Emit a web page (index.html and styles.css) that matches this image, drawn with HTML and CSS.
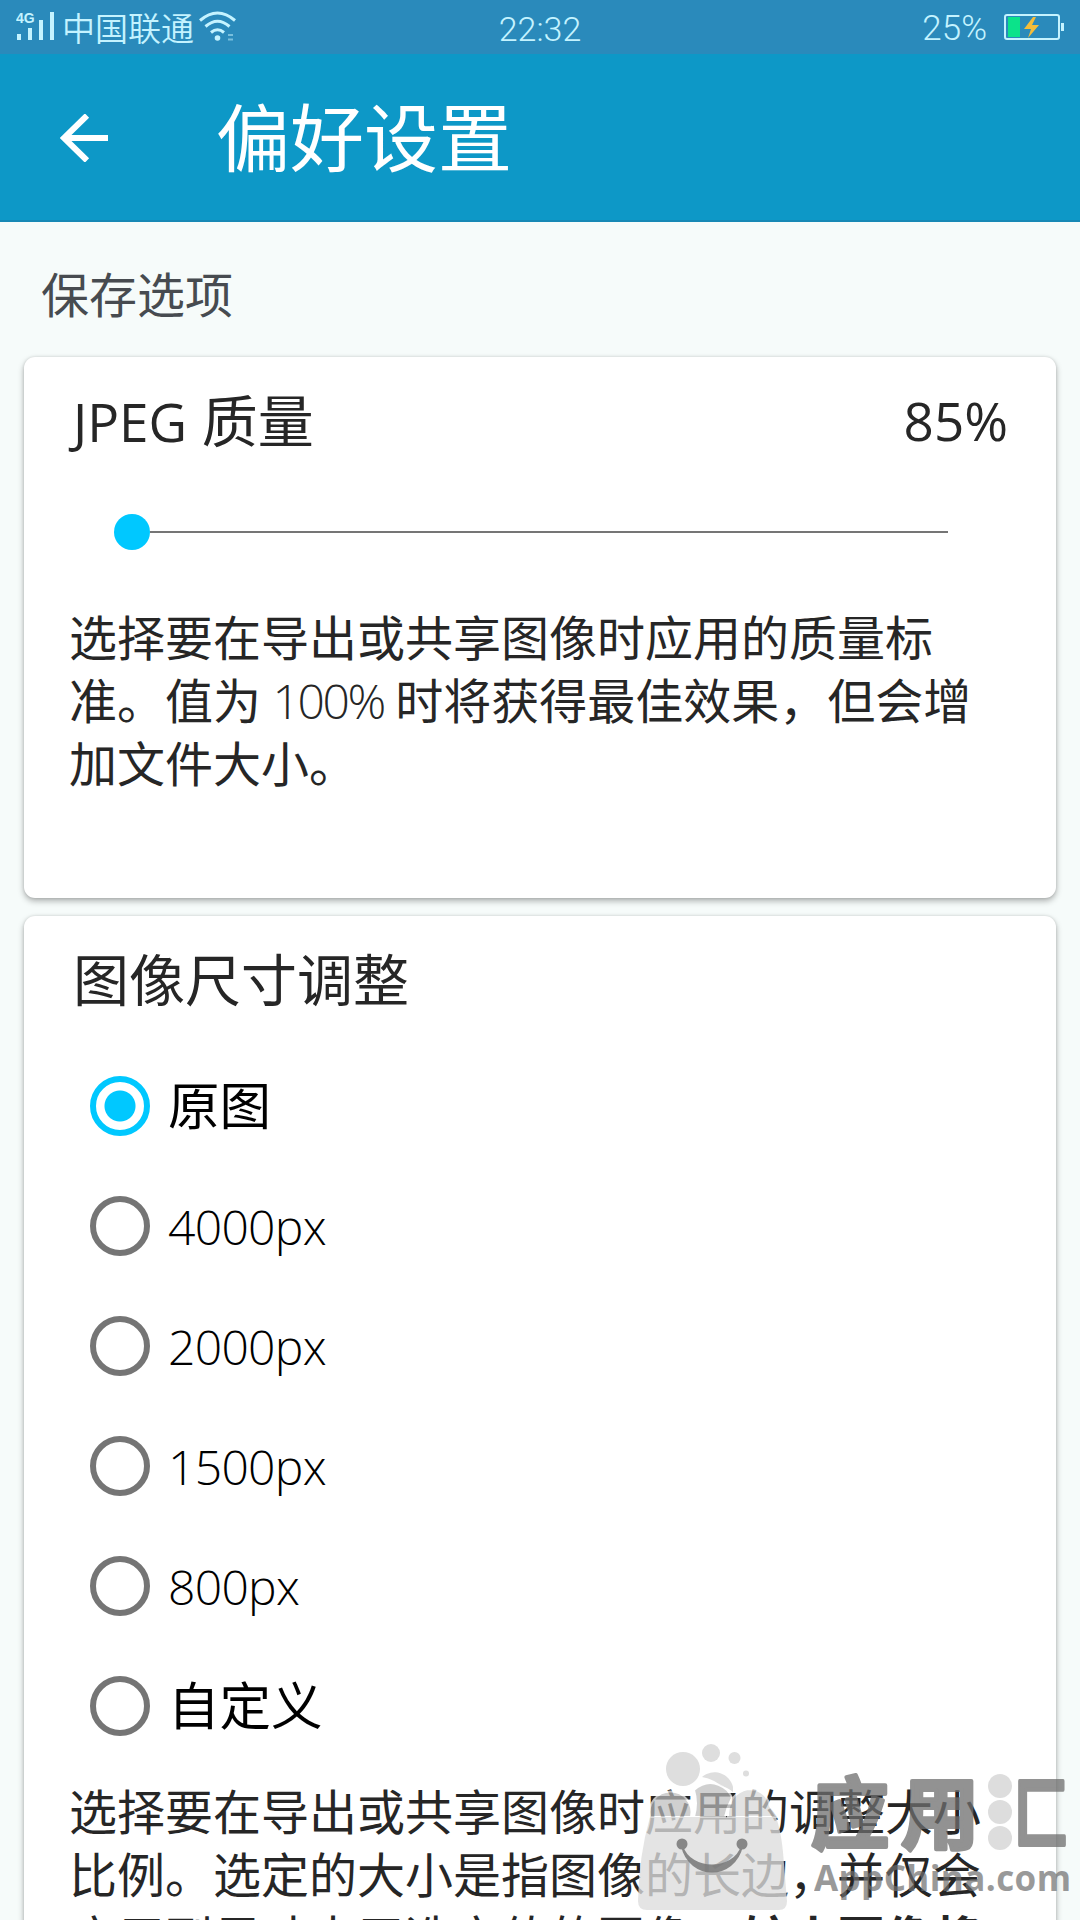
FILE: index.html
```html
<!DOCTYPE html>
<html lang="zh-CN">
<head>
    <meta charset="UTF-8">
    <meta name="viewport" content="width=device-width, initial-scale=1.0">
    <title>偏好设置</title>
    <link rel="stylesheet" href="styles.css">
</head>
<body>
    <div class="status-bar">
        <div class="status-left">
            <svg class="signal" width="42" height="32" viewBox="0 0 42 32">
                <text class="signal-label" x="0" y="12">4G</text>
                <path d="M1 23h4v6H1zM12 17h4v12h-4zM23 9h4v20h-4zM34 1h4v28h-4z"/>
            </svg>
            <span class="carrier">中国联通</span>
            <svg class="wifi" width="38" height="32" viewBox="0 0 38 32">
                <path d="M1 9.500Q18.500-5.500 36 9.500M6.500 15.500Q18.500 5 30.500 15.500M12 21.500Q18.500 16 25 21.500"/>
                <circle cx="18.500" cy="27" r="2.800"/>
                <path class="wifi-io" d="M29 24h5M29 28.500h5"/>
            </svg>
        </div>
        <span class="clock">22:32</span>
        <div class="status-right">
            <span class="percent">25%</span>
            <svg width="60" height="26" viewBox="0 0 60 26">
                <rect class="battery-body" x="1" y="1" width="54" height="24" rx="2"/>
                <rect class="battery-level" x="4" y="3" width="12" height="20"/>
                <path class="battery-tip" d="M57 9h3v8h-3z"/>
                <path class="bolt" d="M29 3L20 15h7l-3 9 11-13h-7l4-8z"/>
            </svg>
        </div>
    </div>

    <header class="toolbar">
        <svg class="back" width="48" height="48" viewBox="0 0 48 48">
            <path d="M48 24H4M27 1.500L4 24l23 22.500"/>
        </svg>
        <h1>偏好设置</h1>
    </header>

    <main>
        <h2 class="section-title">保存选项</h2>

        <section class="card quality">
            <div class="card-head">
                <h3><span class="latin">JPEG</span> 质量</h3>
                <span class="latin value">85%</span>
            </div>
            <div class="slider">
                <div class="thumb"></div>
                <div class="track"></div>
            </div>
            <p>选择要在导出或共享图像时应用的质量标<br>准。值为 <span class="light">100%</span> 时将获得最佳效果，但会增<br>加文件大小。</p>
        </section>

        <section class="card resize">
            <div class="card-head">
                <h3>图像尺寸调整</h3>
            </div>
            <ul class="options">
                <li><span class="radio checked"></span><span class="cjk">原图</span></li>
                <li><span class="radio"></span><span class="size">4000px</span></li>
                <li><span class="radio"></span><span class="size">2000px</span></li>
                <li><span class="radio"></span><span class="size">1500px</span></li>
                <li><span class="radio"></span><span class="size">800px</span></li>
                <li><span class="radio"></span><span class="cjk">自定义</span></li>
            </ul>
            <p>选择要在导出或共享图像时应用的调整大小<br>比例。选定的大小是指图像的长边，并仅会<br>应用到尺寸大于选定值的图像。<b>较小图像将</b></p>
        </section>
    </main>

    <svg class="watermark" width="480" height="200" viewBox="0 0 480 200">
        <g class="bubbles">
            <circle cx="83" cy="49" r="17"/>
            <circle cx="111" cy="33" r="9"/>
            <circle cx="134.500" cy="38" r="6"/>
            <circle cx="146" cy="53.500" r="3"/>
            <path d="M102 57a19 19 0 0 1 31 10v5q-6-5-12-6-7-7-19-9z"/>
        </g>
        <g class="foam">
            <path d="M50 97a21 21 0 1 1 41 0z"/>
            <path d="M94 70q16-14 33 0 4 5 5 8-5 9-7 19H94q4-14 0-27z"/>
            <path class="foam-light" d="M128 97q0-24 20-28 18 0 22 17l6 11z"/>
        </g>
        <path class="bag" d="M50 97h126q5 14 7 35l4 49q0 9-8 9H47q-9 0-9-9 1-46 12-84z"/>
        <g class="smile">
            <circle cx="82" cy="124" r="5.500"/>
            <circle cx="142" cy="124" r="5.500"/>
            <path d="M82 126c8 34 52 34 60 0-8 26-52 26-60 0z"/>
        </g>
        <g class="brand">
            <text x="211" y="123" textLength="168">应用</text>
            <text transform="translate(414 123) scale(.7 1)">匚</text>
        </g>
        <g class="dots">
            <circle cx="400" cy="66" r="12"/>
            <circle cx="400" cy="92" r="12"/>
            <circle cx="400" cy="118" r="12"/>
        </g>
        <text class="site" x="214" y="171" textLength="257">AppChina.com</text>
    </svg>
</body>
</html>
```

FILE: styles.css
```css
* {
    box-sizing: border-box;
}
body {
    margin: 0;
    width: 1080px;
    height: 1920px;
    overflow: hidden;
    position: relative;
    background-color: #f6fbfa;
    color: #262626;
    font-family: "Open Sans", "Noto Sans CJK SC", sans-serif;
}
h1, h2, h3, p, ul {
    margin: 0;
    padding: 0;
    font-size: inherit;
    font-weight: normal;
}
.status-bar {
    height: 54px;
    padding: 0 16px;
    display: grid;
    grid-template-columns: 1fr auto 1fr;
    align-items: center;
    background-color: #2a8abb;
    color: #c4f3ff;
    font-family: Roboto, "Noto Sans CJK SC", sans-serif;
    font-size: 33px;
}
.status-left, .status-right {
    display: flex;
    align-items: center;
}
.status-left svg {
    fill: #c4f3ff;
}
.signal-label {
    font: bold 14px "Liberation Sans", sans-serif;
}
.carrier {
    margin-left: 4px;
    font-weight: 350;
}
.clock, .percent {
    padding-top: 3px;
    font-weight: 300;
    font-size: 34px;
}
.percent {
    font-size: 35px;
}
.wifi {
    margin-left: 5px;
}
.wifi path {
    fill: none;
    stroke: #c4f3ff;
    stroke-width: 3;
}
.wifi .wifi-io {
    stroke-width: 2;
    opacity: .5;
}
.status-right {
    justify-content: flex-end;
    gap: 17px;
}
.battery-body {
    fill: none;
    stroke: #c4f3ff;
    stroke-width: 2;
}
.battery-level {
    fill: #0be38a;
}
.battery-tip {
    fill: #c4f3ff;
}
.bolt {
    fill: #f4bd3a;
}
.toolbar {
    height: 168px;
    padding: 2px 60px 0;
    display: flex;
    align-items: center;
    gap: 108px;
    background-color: #0d98c7;
    border-bottom: 2px solid #1788b5;
    color: #fff;
}
.back {
    fill: none;
    stroke: #fff;
    stroke-width: 6;
}
.toolbar h1 {
    font-size: 74px;
    line-height: 100px;
}
main {
    padding: 0 24px;
}
.section-title {
    padding: 38px 17px 0;
    height: 135px;
    font-size: 48px;
    line-height: 70px;
    color: #474b50;
}
.card {
    padding: 24px 45px;
    background-color: #fff;
    border-radius: 11px;
    box-shadow: 0 3px 6px rgba(0, 0, 0, .3), 0 0 3px rgba(0, 0, 0, .12);
}
.quality {
    height: 541px;
    margin-bottom: 18px;
}
.resize {
    height: 1100px;
}
.card-head {
    height: 82px;
    padding: 0 3px 0 4px;
    display: flex;
    justify-content: space-between;
    font-size: 56px;
    line-height: 78px;
}
.latin {
    font-size: 53px;
    font-weight: 500;
}
.value {
    line-height: 80px;
}
.slider {
    height: 138px;
    padding: 0 63px 0 45px;
    display: flex;
    align-items: center;
}
.thumb {
    width: 36px;
    height: 36px;
    border-radius: 50%;
    background-color: #00c8ff;
}
.track {
    flex: 1;
    height: 2px;
    background-color: #757575;
}
.card p {
    padding-top: 5px;
    font-size: 48px;
    line-height: 63px;
    white-space: nowrap;
}
.light {
    font-weight: 300;
    letter-spacing: -2.4px;
    margin: 0 -1px 0 -1px;
}
.options {
    list-style: none;
    padding: 24px 21px 0;
    color: #000;
}
.options li {
    height: 120px;
    display: flex;
    align-items: center;
    gap: 18px;
}
.cjk {
    padding-bottom: 7px;
    font-size: 51.5px;
}
.size {
    font-size: 48px;
    font-weight: 300;
    letter-spacing: -.7px;
}
.resize p {
    padding-top: 14px;
}
.radio {
    width: 60px;
    height: 60px;
    border: 6px solid #757575;
    border-radius: 50%;
}
.radio.checked {
    border-color: #00c8ff;
    background: radial-gradient(circle, #00c8ff 15px, #fff 16px);
}
.watermark {
    position: absolute;
    left: 600px;
    top: 1720px;
}
.bubbles {
    fill: #d6d6d6;
    opacity: .8;
}
.foam {
    fill: #bdbdbd;
    stroke: #fff;
    stroke-width: 2;
    opacity: .7;
}
.foam-light {
    fill: #d6d6d6;
}
.bag {
    fill: #dcdcdc;
    opacity: .78;
}
.smile {
    fill: #777;
    opacity: .85;
}
.smile path {
    stroke: #777;
    stroke-width: 2;
}
.brand {
    font: bold 78px "Noto Sans CJK SC", sans-serif;
    fill: #6e6e6e;
    stroke: #6e6e6e;
    stroke-width: 4;
    stroke-linejoin: round;
    opacity: .75;
}
.dots {
    fill: #d5d5d5;
    opacity: .8;
}
.site {
    font: bold 35px "Open Sans", sans-serif;
    fill: #6e6e6e;
    opacity: .7;
}
```
